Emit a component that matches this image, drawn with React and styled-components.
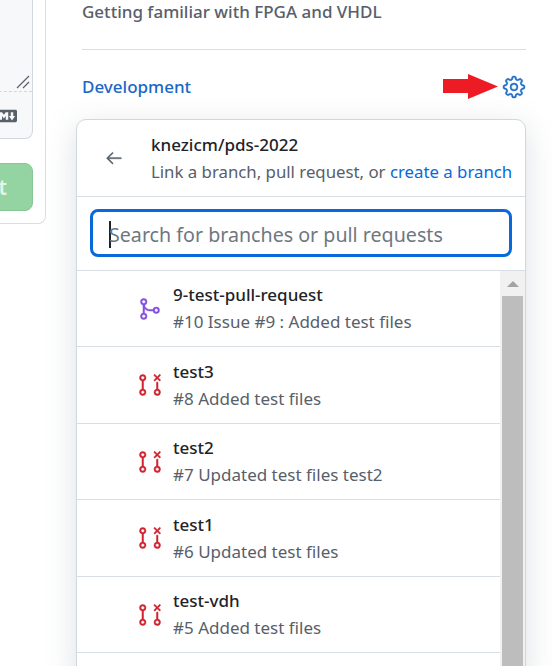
import React from 'react';
import styled, { createGlobalStyle } from 'styled-components';
import { GoArrowLeft, GoGear, GoGitMerge, GoGitPullRequestClosed } from 'react-icons/go';

const GlobalStyles = createGlobalStyle`
  * {
    box-sizing: border-box;
    margin: 0;
    padding: 0;
  }
  html, body {
    height: 100%;
    overflow: hidden;
    background: #fff;
  }
  body {
    font-family: "Noto Sans", "Open Sans", sans-serif;
    color: #1f2328;
  }
`;

const Page = styled.div`
  display: flex;
  height: 666px;
  width: 553px;
  overflow: hidden;
`;

const LeftColumn = styled.div`
  flex: 0 0 46px;
  width: 46px;
  height: 224px;
  display: flex;
  justify-content: flex-end;
  overflow: hidden;
`;

const CommentCard = styled.div`
  flex: 0 0 200px;
  height: 224px;
  padding-right: 12px;
  border: 1px solid #d8dee4;
  border-top: none;
  border-radius: 0 0 8px 8px;
`;

const EditorBox = styled.div`
  height: 139px;
  background: #f6f8fa;
  border: 1px solid #d0d7de;
  border-top: none;
  border-radius: 0 0 8px 8px;
  display: flex;
  flex-direction: column;
`;

const TextArea = styled.div`
  height: 92px;
  background: #f6f8fa;
  border-bottom: 1px dashed #d0d7de;
  display: flex;
  align-items: flex-end;
  justify-content: flex-end;
  padding: 0 2px 2px 0;
`;

const MarkdownRow = styled.div`
  display: flex;
  justify-content: flex-end;
  padding: 14px 15px 0 0;
  color: #57606a;
`;

const SubmitRow = styled.div`
  display: flex;
  justify-content: flex-end;
  margin-top: 24px;
`;

const SubmitButton = styled.div`
  width: 120px;
  height: 48px;
  border-radius: 8px;
  background: #94d3a2;
  border: 1px solid #86c794;
  color: #e4f4e8;
  font-size: 21px;
  font-weight: 600;
  line-height: 46px;
  text-align: right;
  padding-right: 25px;
`;

const Sidebar = styled.aside`
  flex: 1;
  padding: 0 27px 0 36px;
`;

const SectionTitle = styled.p`
  height: 50px;
  border-bottom: 1px solid #d8dee4;
  color: #57606a;
  font-size: 17px;
  font-weight: 500;
  line-height: 24px;
`;

const DevelopmentRow = styled.div`
  display: flex;
  align-items: center;
  justify-content: space-between;
  height: 69px;
  padding-top: 4px;
`;

const DevelopmentLink = styled.span`
  color: #1a67c8;
  font-size: 17px;
  font-weight: 500;
`;

const GearGroup = styled.div`
  display: flex;
  align-items: center;
  gap: 4px;
  color: #1f6fc9;
  svg:last-child {
    stroke: currentColor;
    stroke-width: 0.4px;
  }
`;

const Popover = styled.section`
  margin-left: -6px;
  width: 450px;
  height: 560px;
  background: #fff;
  border: 1px solid #d0d7de;
  border-radius: 10px 10px 0 0;
  box-shadow: 0 8px 30px rgba(140, 149, 159, 0.3);
`;

const PopoverHeader = styled.header`
  display: flex;
  align-items: center;
  height: 77px;
  border-bottom: 1px solid #d8dee4;
`;

const BackButton = styled.button`
  flex: 0 0 74px;
  display: flex;
  justify-content: center;
  border: none;
  background: none;
  color: #57606a;
  svg {
    stroke: currentColor;
    stroke-width: 0.5px;
  }
`;

const HeaderText = styled.div`
  display: flex;
  flex-direction: column;
  gap: 3px;
`;

const RepoName = styled.span`
  font-size: 17px;
  font-weight: 500;
  line-height: 24px;
`;

const HeaderHint = styled.span`
  color: #57606a;
  font-size: 16.8px;
  line-height: 24px;
  white-space: nowrap;
`;

const HintLink = styled.span`
  color: #0969da;
`;

const SearchArea = styled.div`
  height: 74px;
  padding: 12px 13px 13px;
  border-bottom: 1px solid #d8dee4;
`;

const SearchBox = styled.div`
  height: 48px;
  border: 3px solid #0969da;
  border-radius: 8px;
  display: flex;
  align-items: center;
  padding: 2px 0 0 16px;
  font-size: 19.65px;
  color: #6e7781;
  white-space: nowrap;
`;

const Caret = styled.span`
  width: 2px;
  height: 27px;
  margin-right: -2px;
  background: #1f2328;
`;

const ListArea = styled.div`
  display: flex;
  height: 420px;
`;

const List = styled.ul`
  flex: 1;
  list-style: none;
`;

const Row = styled.li`
  display: flex;
  align-items: center;
  height: 76px;
  border-bottom: 1px solid #d8dee4;
  &:nth-child(even) {
    height: 77px;
  }
`;

const IconSlot = styled.div`
  flex: 0 0 96px;
  display: flex;
  justify-content: flex-end;
  padding-right: 11px;
  color: ${(p) => p.$color};
  svg {
    stroke: currentColor;
    stroke-width: 0.5px;
  }
`;

const RowText = styled.div`
  display: flex;
  flex-direction: column;
  gap: 3px;
`;

const BranchName = styled.span`
  font-size: 17px;
  font-weight: 500;
  line-height: 24px;
`;

const PullTitle = styled.span`
  color: #57606a;
  font-size: 17px;
  line-height: 24px;
`;

const Scrollbar = styled.div`
  flex: 0 0 25px;
  background: #f1f1f1;
  display: flex;
  flex-direction: column;
  align-items: center;
`;

const ScrollArrow = styled.div`
  width: 0;
  height: 0;
  margin: 10px 0 9px;
  border-left: 6px solid transparent;
  border-right: 6px solid transparent;
  border-bottom: 6px solid #a3a3a3;
`;

const ScrollThumb = styled.div`
  width: 21px;
  flex: 1;
  background: #bdbdbd;
`;

function RedArrow() {
  return (
    <svg width="55" height="25" viewBox="0 0 55 25" style={{ display: 'block' }}>
      <path d="M0 5h25V0l30 12.500L25 25v-6H0z" fill="#ed1c24" />
    </svg>
  );
}

function MarkdownIcon() {
  return (
    <svg width="20" height="20" viewBox="0 0 16 16" fill="currentColor" style={{ display: 'block' }}>
      <path d="M14.85 3c.63 0 1.15.52 1.14 1.15v7.7c0 .63-.51 1.15-1.15 1.15H1.15C.52 13 0 12.48 0 11.85v-7.7C0 3.52.52 3 1.15 3ZM9 11V5H7L5.5 7 4 5H2v6h2V8l1.5 1.92L7 8v3Zm2.99.5L14.5 8H13V5h-2v3H9.5Z" />
    </svg>
  );
}

const pulls = [
  { name: '9-test-pull-request', title: '#10 Issue #9 : Added test files', merged: true },
  { name: 'test3', title: '#8 Added test files' },
  { name: 'test2', title: '#7 Updated test files test2' },
  { name: 'test1', title: '#6 Updated test files' },
  { name: 'test-vdh', title: '#5 Added test files' },
];

export default function App() {
  return (
    <>
      <GlobalStyles />
      <Page>
        <LeftColumn>
          <CommentCard>
            <EditorBox>
              <TextArea>
                <svg width="14" height="14" viewBox="0 0 14 14" stroke="#57606a" strokeWidth="1.2">
                  <path d="M1 13L13 1M7 13l6-6" />
                </svg>
              </TextArea>
              <MarkdownRow>
                <MarkdownIcon />
              </MarkdownRow>
            </EditorBox>
            <SubmitRow>
              <SubmitButton>t</SubmitButton>
            </SubmitRow>
          </CommentCard>
        </LeftColumn>
        <Sidebar>
          <SectionTitle>Getting familiar with FPGA and VHDL</SectionTitle>
          <DevelopmentRow>
            <DevelopmentLink>Development</DevelopmentLink>
            <GearGroup>
              <RedArrow />
              <GoGear size={24} />
            </GearGroup>
          </DevelopmentRow>
          <Popover>
            <PopoverHeader>
              <BackButton type="button">
                <GoArrowLeft size={20} />
              </BackButton>
              <HeaderText>
                <RepoName>knezicm/pds-2022</RepoName>
                <HeaderHint>
                  Link a branch, pull request, or <HintLink>create a branch</HintLink>
                </HeaderHint>
              </HeaderText>
            </PopoverHeader>
            <SearchArea>
              <SearchBox>
                <Caret />
                Search for branches or pull requests
              </SearchBox>
            </SearchArea>
            <ListArea>
              <List>
                {pulls.map((pull) => (
                  <Row key={pull.name}>
                    <IconSlot $color={pull.merged ? '#8250df' : '#cf222e'}>
                      {pull.merged ? <GoGitMerge size={24} /> : <GoGitPullRequestClosed size={24} />}
                    </IconSlot>
                    <RowText>
                      <BranchName>{pull.name}</BranchName>
                      <PullTitle>{pull.title}</PullTitle>
                    </RowText>
                  </Row>
                ))}
              </List>
              <Scrollbar>
                <ScrollArrow />
                <ScrollThumb />
              </Scrollbar>
            </ListArea>
          </Popover>
        </Sidebar>
      </Page>
    </>
  );
}
